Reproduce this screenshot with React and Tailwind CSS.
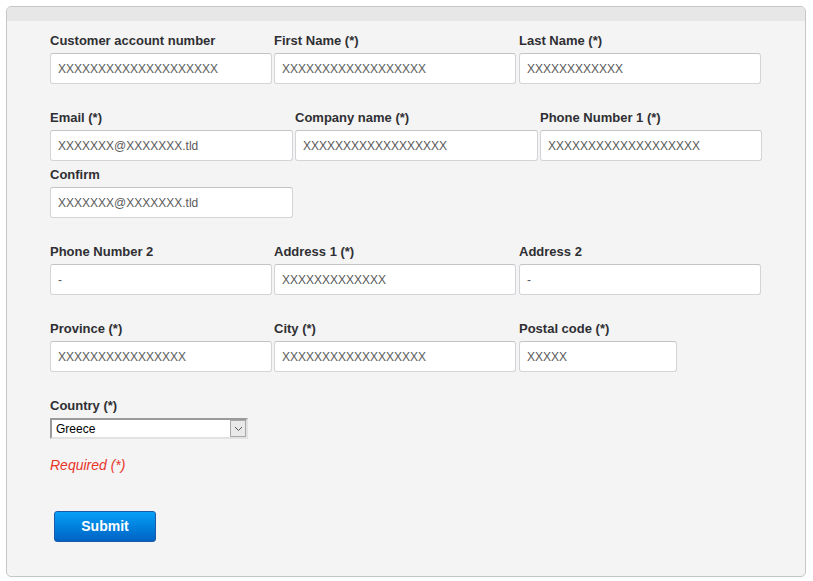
const rows = [
  {
    gap: 'mb-[24px]',
    fields: [
      { label: 'Customer account number', value: 'XXXXXXXXXXXXXXXXXXXX', w: 'w-[224px]', iw: 'w-[222px]' },
      { label: 'First Name (*)', value: 'XXXXXXXXXXXXXXXXXX', w: 'w-[245px]', iw: 'w-[242px]' },
      { label: 'Last Name (*)', value: 'XXXXXXXXXXXX', w: 'w-[245px]', iw: 'w-[242px]' },
    ],
  },
  {
    gap: 'mb-[4px]',
    fields: [
      { label: 'Email (*)', value: 'XXXXXXX@XXXXXXX.tld', w: 'w-[245px]', iw: 'w-[243px]' },
      { label: 'Company name (*)', value: 'XXXXXXXXXXXXXXXXXX', w: 'w-[245px]', iw: 'w-[243px]' },
      { label: 'Phone Number 1 (*)', value: 'XXXXXXXXXXXXXXXXXXX', w: 'w-[224px]', iw: 'w-[222px]' },
    ],
  },
  {
    gap: 'mb-[24px]',
    fields: [{ label: 'Confirm', value: 'XXXXXXX@XXXXXXX.tld', w: 'w-[245px]', iw: 'w-[243px]' }],
  },
  {
    gap: 'mb-[24px]',
    fields: [
      { label: 'Phone Number 2', value: '-', w: 'w-[224px]', iw: 'w-[222px]' },
      { label: 'Address 1 (*)', value: 'XXXXXXXXXXXXX', w: 'w-[245px]', iw: 'w-[242px]' },
      { label: 'Address 2', value: '-', w: 'w-[245px]', iw: 'w-[242px]' },
    ],
  },
  {
    gap: 'mb-[24px]',
    fields: [
      { label: 'Province (*)', value: 'XXXXXXXXXXXXXXXX', w: 'w-[224px]', iw: 'w-[222px]' },
      { label: 'City (*)', value: 'XXXXXXXXXXXXXXXXXX', w: 'w-[245px]', iw: 'w-[242px]' },
      { label: 'Postal code (*)', value: 'XXXXX', w: 'w-[160px]', iw: 'w-[158px]' },
    ],
  },
];

function Field({ label, value, w, iw }) {
  return (
    <div className={`${w} shrink-0`}>
      <div className="h-[18px] pt-[1px] mb-[4px] text-[13px] leading-[18px] font-bold text-[#2f2f33] whitespace-nowrap">
        {label}
      </div>
      <div
        className={`${iw} h-[31px] bg-white border border-[#d4d4d8] border-t-[#c4c4c8] rounded-[3px] pl-[7px] flex items-center text-[12px] text-[#5a5a5a] whitespace-nowrap overflow-hidden`}
      >
        {value}
      </div>
    </div>
  );
}

export default function App() {
  return (
    <div className="w-[813px] h-[581px] bg-white pt-[6px] pl-[6px] font-['Liberation_Sans',Arial,sans-serif]">
      <div className="w-[800px] h-[571px] bg-[#f4f4f4] border border-[#c6c6c6] rounded-[5px] overflow-hidden">
        <div className="h-[14px] bg-[#e7e7e7]" />
        <div className="pl-[43px] pt-[10px]">
          {rows.map((row, i) => (
            <div key={i} className={`flex ${row.gap}`}>
              {row.fields.map((f) => (
                <Field key={f.label} {...f} />
              ))}
            </div>
          ))}

          <div className="h-[18px] pt-[1px] mb-[4px] text-[13px] leading-[18px] font-bold text-[#2f2f33]">Country (*)</div>
          <div className="w-[198px] h-[21px] bg-white border-2 border-t-[#9a9a9a] border-l-[#9a9a9a] border-b-[#e2e2e2] border-r-[#e2e2e2] flex items-center">
            <span className="flex-1 pl-[4px] text-[12px] text-black">Greece</span>
            <span className="w-[16px] h-[17px] bg-[#e9e9e9] border border-[#a8a8a8] flex items-center justify-center">
              <svg width="9" height="6" viewBox="0 0 9 6">
                <path d="M1 1 L4.5 4.5 L8 1" fill="none" stroke="#555" strokeWidth="1" />
              </svg>
            </span>
          </div>

          <div className="mt-[18px] h-[16px] text-[14px] leading-[16px] italic text-[#e8332a]">Required (*)</div>

          <button className="mt-[38px] ml-[4px] w-[102px] h-[31px] rounded-[3px] border border-[#1a5aa6] bg-gradient-to-b from-[#0aa0f8] to-[#0062c4] text-white text-[14px] font-bold">
            Submit
          </button>
        </div>
      </div>
    </div>
  );
}
